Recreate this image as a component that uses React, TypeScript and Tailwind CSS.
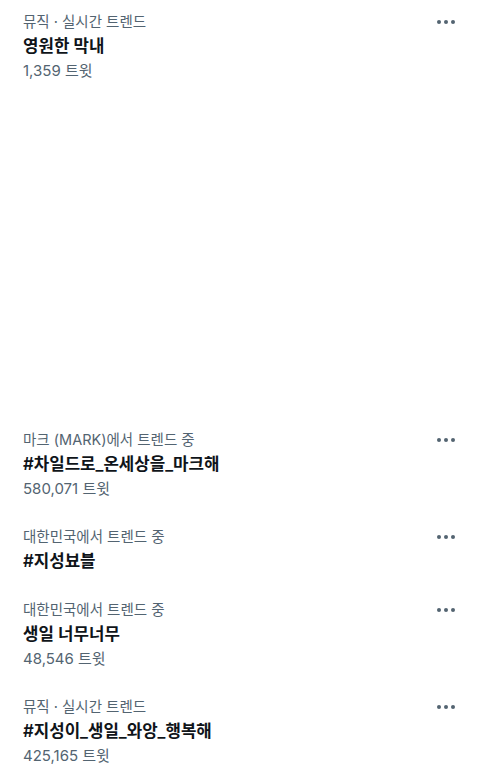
import React from "react";

type Trend = { cat: string; title: string; count?: string };

const Dots = () => (
  <svg width="20" height="6" viewBox="0 0 20 6" className="block">
    <circle cx="3" cy="3" r="2" fill="#536471" />
    <circle cx="10" cy="3" r="2" fill="#536471" />
    <circle cx="17" cy="3" r="2" fill="#536471" />
  </svg>
);

const Row = ({ t }: { t: Trend }) => (
  <div className="flex items-start justify-between pl-[23px] pr-[24px] py-[12px]">
    <div className="flex flex-col">
      <div className="text-[14.5px] leading-[24px] text-[#536471]">{t.cat}</div>
      <div className="text-[16.8px] leading-[25px] font-semibold text-[#0f1419]">{t.title}</div>
      {t.count && (
        <div className="text-[15px] leading-[24px] text-[#536471]">{t.count}</div>
      )}
    </div>
    <div className="pt-[9px]">
      <Dots />
    </div>
  </div>
);

export default function App() {
  const first: Trend = { cat: "뮤직 · 실시간 트렌드", title: "영원한 막내", count: "1,359 트윗" };
  const rest: Trend[] = [
    { cat: "마크 (MARK)에서 트렌드 중", title: "#차일드로_온세상을_마크해", count: "580,071 트윗" },
    { cat: "대한민국에서 트렌드 중", title: "#지성뵤블" },
    { cat: "대한민국에서 트렌드 중", title: "생일 너무너무", count: "48,546 트윗" },
    { cat: "뮤직 · 실시간 트렌드", title: "#지성이_생일_와앙_행복해", count: "425,165 트윗" },
  ];
  return (
    <div
      className="w-[480px] h-[777px] bg-white overflow-hidden"
      style={{ fontFamily: '"Inter", "Noto Sans CJK KR", sans-serif' }}
    >
      <div className="-mt-[2px]">
        <Row t={first} />
      </div>
      <div className="h-[321px]" />
      {rest.map((t, i) => (
        <Row key={i} t={t} />
      ))}
    </div>
  );
}
